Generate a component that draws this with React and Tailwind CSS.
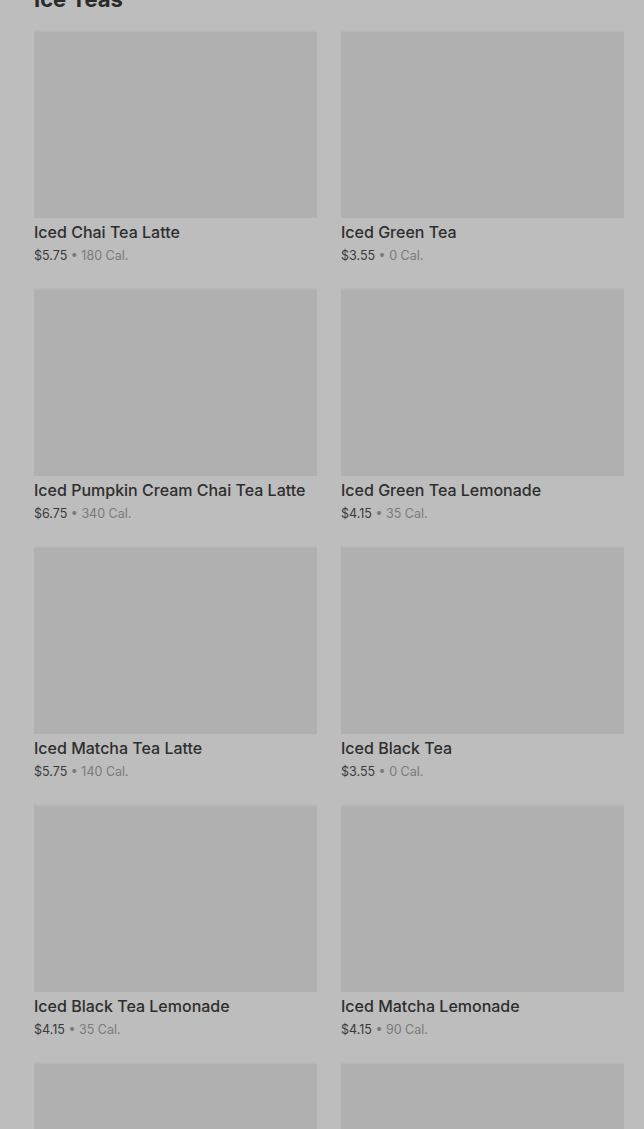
import React from "react";

const ITEMS = [
  { name: "Iced Chai Tea Latte", price: "$5.75", cal: "180 Cal." },
  { name: "Iced Green Tea", price: "$3.55", cal: "0 Cal." },
  { name: "Iced Pumpkin Cream Chai Tea Latte", price: "$6.75", cal: "340 Cal." },
  { name: "Iced Green Tea Lemonade", price: "$4.15", cal: "35 Cal." },
  { name: "Iced Matcha Tea Latte", price: "$5.75", cal: "140 Cal." },
  { name: "Iced Black Tea", price: "$3.55", cal: "0 Cal." },
  { name: "Iced Black Tea Lemonade", price: "$4.15", cal: "35 Cal." },
  { name: "Iced Matcha Lemonade", price: "$4.15", cal: "90 Cal." },
  { name: "Iced Peach Green Tea", price: "$4.15", cal: "60 Cal." },
  { name: "Iced Passion Tango Tea", price: "$3.55", cal: "0 Cal." },
];

function MenuCard({ item }) {
  return (
    <div className="flex flex-col">
      <div className="h-[188px] bg-[#b0b0b0] border-t-2 border-[#b8b8b8]" />
      <div className="mt-[4px] text-[16px] leading-[20px] font-medium text-[#2e2e2e] whitespace-nowrap">
        {item.name}
      </div>
      <div className="mt-[5px] text-[12.5px] leading-[17px] text-[#3a3a3a]">
        {item.price}
        <span className="text-[#7a7a7a]"> • {item.cal}</span>
      </div>
    </div>
  );
}

export default function App() {
  return (
    <div className="min-h-screen bg-[#bdbdbd] pl-[34px] pr-[20px] pb-6 font-['Inter',sans-serif]">
      <h2 className="-mt-[13px] mb-[19px] text-[22px] leading-[24px] font-bold text-[#2a2a2a]">
        Ice Teas
      </h2>
      <div className="grid grid-cols-2 gap-x-6 gap-y-6">
        {ITEMS.map((item) => (
          <MenuCard key={item.name} item={item} />
        ))}
      </div>
    </div>
  );
}
